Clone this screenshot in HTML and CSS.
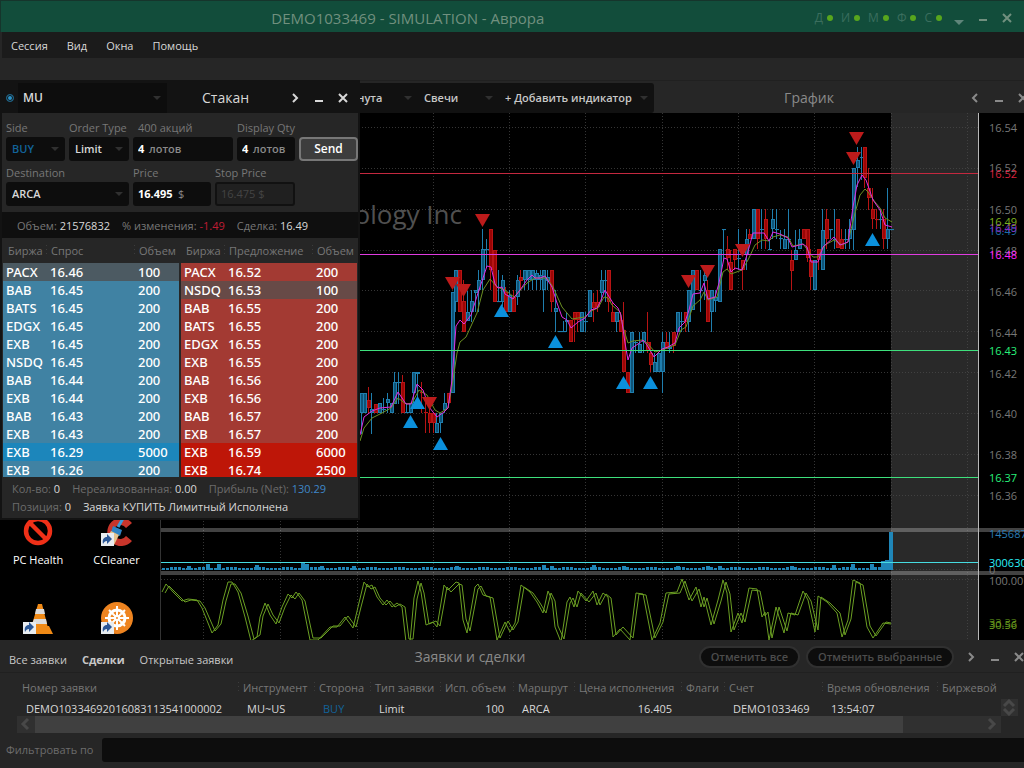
FILE: index.html
```html
<!DOCTYPE html>
<html lang="ru">
<head>
    <meta charset="UTF-8">
    <meta name="viewport" content="width=device-width, initial-scale=1.0">
    <title>DEMO1033469 - SIMULATION - Аврора</title>
    <link rel="stylesheet" href="styles.css">
</head>
<body>
    <!-- Title bar -->
    <header class="titlebar">
        <h1>DEMO1033469 - SIMULATION - Аврора</h1>
        <ul class="status">
            <li>Д</li>
            <li>И</li>
            <li>М</li>
            <li>Ф</li>
            <li>С</li>
        </ul>
        <div class="window-buttons">
            <button aria-label="Свернуть в трей"><svg width="10" height="12"><path d="M0 8h10l-5 5z" fill="#5f857a"/></svg></button>
            <button aria-label="Свернуть"><svg width="10" height="12"><path d="M1 8h8" /></svg></button>
            <button aria-label="Закрыть"><svg width="10" height="12"><path d="M1 2l8 8M9 2l-8 8"/></svg></button>
        </div>
    </header>

    <!-- Menu -->
    <nav class="menu">
        <a href="#session">Сессия</a>
        <a href="#view">Вид</a>
        <a href="#windows">Окна</a>
        <a href="#help">Помощь</a>
    </nav>
    <div class="toolbar"></div>

    <main class="workspace">
        <!-- Desktop icons -->
        <div class="desktop">
            <div class="shortcut">
                <svg width="36" height="36" viewBox="0 0 36 36">
                    <circle cx="18" cy="18" r="12" fill="none" stroke="#f03018" stroke-width="4.5"/>
                    <path d="M10 10l16 16" stroke="#f03018" stroke-width="4.5"/>
                </svg>
                <span>PC Health</span>
            </div>
            <div class="shortcut">
                <svg width="36" height="36" viewBox="0 0 36 36">
                    <path d="M33 10a14 14 0 1 0 0 18l-6-5a7 7 0 1 1 0-8z" fill="#c8352b"/>
                    <path d="M26 2l-7 12" stroke="#3b9ad8" stroke-width="3"/>
                    <path d="M14 13l9 4-2 6-9-4z" fill="#2f83c4"/>
                    <path d="M12 18l8 4-5 10-9-4z" fill="#e6c58e"/>
                    <path d="M2 20h13v13H2z" fill="#e8ecf0"/>
                    <path d="M4 31c-1-5 1-7 4-7v-3l5 5-5 5v-3c-2 0-3 1-4 3z" fill="#2b5796"/>
                </svg>
                <span>CCleaner</span>
            </div>
            <div class="shortcut">
                <svg width="36" height="36" viewBox="0 0 36 36">
                    <path d="M9 26h20l4 8H5z" fill="#f08a16"/>
                    <path d="M18 4h4l6 24c-4 3-13 3-17 0z" fill="#f08a16"/>
                    <path d="M16 9h8l1 5H15zM14 19h12l1 5H12z" fill="#dcdcdc"/>
                    <path d="M3 22h13v12H3z" fill="#e8ecf0"/>
                    <path d="M5 32c-1-5 1-7 4-7v-3l5 5-5 5v-3c-2 0-3 1-4 3z" fill="#2b5796"/>
                </svg>
            </div>
            <div class="shortcut">
                <svg width="36" height="36" viewBox="0 0 36 36">
                    <circle cx="18" cy="18" r="16" fill="#ee8420"/>
                    <g fill="none" stroke="#fff" stroke-width="3">
                        <circle cx="18" cy="18" r="8"/>
                        <path stroke-width="2" d="M18 6v24M6 18h24M10 10l16 16M26 10L10 26"/>
                        <circle cx="18" cy="18" r="2" fill="#ee8420" stroke-width="2"/>
                    </g>
                    <path d="M2 22h13v12H2z" fill="#e8ecf0"/>
                    <path d="M4 32c-1-5 1-7 4-7v-3l5 5-5 5v-3c-2 0-3 1-4 3z" fill="#2b5796"/>
                </svg>
            </div>
        </div>

        <!-- Chart window -->
        <section class="chart-window">
            <div class="chart-header">
                <div class="drop chart-period"><select aria-label="Период"><option>1 минута</option></select></div>
                <div class="drop chart-type"><select aria-label="Тип графика"><option>Свечи</option></select></div>
                <div class="drop chart-add"><select aria-label="Индикатор"><option>+ Добавить индикатор</option></select></div>
                <h2>График</h2>
                <div class="window-buttons">
                    <button aria-label="Назад"><svg width="10" height="12"><path d="M7 2L3 6l4 4"/></svg></button>
                    <button aria-label="Свернуть"><svg width="10" height="12"><path d="M1 9h8"/></svg></button>
                    <button aria-label="Закрыть"><svg width="10" height="12"><path d="M1 2l8 8M9 2l-8 8"/></svg></button>
                </div>
            </div>
            <svg class="chart" id="chart" viewBox="161 113 863 527" preserveAspectRatio="xMaxYMin slice">
                <rect x="891" y="113" width="87" height="527" fill="#292929"/>
                <g id="grid" class="grid"></g>
                <text class="watermark" x="462" y="224" text-anchor="end">Micron Technology Inc</text>
                <g id="candles"></g>
                <polyline class="ma-slow" points="360,441 364,428 372,418 382,413 391,408 398,398 406,404 412,403 419,390 427,395 435,410 440,413 448,408 453,380 457,353 460,342 466,337 477,313 483,290 490,279 497,287 505,290 514,297 527,283 535,278 547,278 553,287 562,307 572,319 578,318 585,317 591,311 598,308 604,297 608,298 612,305 620,312 623,327 628,343 633,341 642,340 647,343 655,352 662,350 675,345 681,330 686,327 693,306 700,300 704,292 708,300 717,297 723,272 727,269 731,274 742,270 748,260 755,245 762,240 769,241 773,237 780,235 788,237 793,246 803,244 813,257 818,257 825,245 834,240 842,245 848,242 855,213 860,195 865,189 868,192 875,202 880,208 885,218 892,222"/>
                <polyline class="ma-fast" points="360,435 364,417 372,411 380,408 391,407 398,392 406,404 411,404 417,384 423,390 429,407 437,417 444,412 448,408 452,380 456,326 460,320 464,324 471,315 478,293 487,266 491,267 495,284 498,288 502,287 505,294 513,299 520,290 527,280 532,275 535,278 540,278 545,276 552,287 557,303 562,317 567,320 571,328 578,322 585,318 591,310 597,308 601,300 605,290 608,295 613,303 618,308 621,315 625,343 628,360 632,348 638,344 643,340 647,345 654,357 662,349 668,347 675,343 679,328 685,322 689,310 693,294 700,293 704,283 708,299 715,297 719,283 724,258 727,259 731,272 735,268 742,270 747,255 753,233 764,233 769,241 773,232 780,234 788,238 792,247 803,244 807,247 811,262 818,262 823,247 834,237 840,245 848,242 853,207 857,185 862,175 866,180 873,200 880,210 885,225 892,227"/>
                <path d="M161 173.500h817" stroke="#c4283f"/>
                <path d="M161 254.500h817" stroke="#e03ce0"/>
                <path d="M161 350.500h817" stroke="#3ee07c"/>
                <path d="M161 477.500h817" stroke="#3ee07c"/>
                <g id="markers"></g>

                <g id="volume" fill="#1f86b8"></g>
                <path d="M161 562.500h817" stroke="#46dce0"/>
                <g id="stochastic" class="stochastic"></g>
                <path d="M161 530h863M161 573h863" stroke="#fff" stroke-opacity=".26" stroke-width="4"/>
                <path d="M978.500 113v527" stroke="#b8b8b8"/>

                <g class="axis">
                    <text x="989" y="132">16.54</text>
                    <text x="989" y="172">16.52</text>
                    <text x="989" y="214">16.50</text>
                    <text x="989" y="255">16.48</text>
                    <text x="989" y="296">16.46</text>
                    <text x="989" y="337">16.44</text>
                    <text x="989" y="378">16.42</text>
                    <text x="989" y="418">16.40</text>
                    <text x="989" y="459">16.38</text>
                    <text x="989" y="500">16.36</text>
                    <text x="989" y="178" fill="#d8203c">16.52</text>
                    <text x="989" y="235" fill="#1d6da8">16.49</text>
                    <text x="989" y="232" fill="#8d2bbd">16.49</text>
                    <text x="989" y="226" fill="#7cb01e">16.49</text>
                    <text x="989" y="259" fill="#ff20ff">16.48</text>
                    <text x="989" y="355" fill="#28f07a">16.43</text>
                    <text x="989" y="482" fill="#28f07a">16.37</text>
                    <text x="989" y="538" fill="#2a7db5">1456870</text>
                    <text x="989" y="574">0</text>
                    <text x="989" y="567" fill="#2af0f8">300630</text>
                    <text x="989" y="585">100.00</text>
                    <text x="989" y="627" fill="#4f7c16">33.33</text>
                    <text x="989" y="629" fill="#6f9f1e">30.56</text>
                </g>
            </svg>
        </section>

        <!-- Order book window -->
        <section class="book">
            <div class="book-header">
                <input type="radio" checked aria-label="Связать окна">
                <div class="drop symbol"><select aria-label="Инструмент"><option>MU</option></select></div>
                <h2>Стакан</h2>
                <div class="window-buttons">
                    <button aria-label="Вперед"><svg width="10" height="12"><path d="M3 2l4 4-4 4"/></svg></button>
                    <button aria-label="Свернуть"><svg width="10" height="12"><path d="M1 9h8"/></svg></button>
                    <button aria-label="Закрыть"><svg width="10" height="12"><path d="M1 2l8 8M9 2l-8 8"/></svg></button>
                </div>
            </div>

            <form class="order-form">
                <div class="field side">
                    <label for="side">Side</label>
                    <div class="drop box"><select id="side"><option>BUY</option></select></div>
                </div>
                <div class="field">
                    <label for="type">Order Type</label>
                    <div class="drop box"><select id="type"><option>Limit</option></select></div>
                </div>
                <div class="field">
                    <label class="inset" for="qty">400 акций</label>
                    <div class="box unit"><input id="qty" type="text" value="4" size="1"><span>лотов</span></div>
                </div>
                <div class="field display">
                    <label for="display">Display Qty</label>
                    <div class="box unit"><input id="display" type="text" value="4" size="1"><span>лотов</span></div>
                </div>
                <button class="send" type="button">Send</button>
                <div class="field destination">
                    <label for="dest">Destination</label>
                    <div class="drop box"><select id="dest"><option>ARCA</option></select></div>
                </div>
                <div class="prices">
                    <div class="field">
                        <label for="price">Price</label>
                        <div class="box unit price"><input id="price" type="text" value="16.495"><span>$</span></div>
                    </div>
                    <div class="field">
                        <label for="stop">Stop Price</label>
                        <div class="box stop"><input id="stop" type="text" value="16.475 $" disabled></div>
                    </div>
                </div>
            </form>

            <p class="stats">
                <span>Объем: <b>21576832</b></span>
                <span>% изменения: <b class="down">-1.49</b></span>
                <span>Сделка: <b>16.49</b></span>
            </p>

            <div class="levels">
                <table class="bids">
                    <thead><tr><th>Биржа</th><th>Спрос</th><th>Объем</th></tr></thead>
                    <tbody>
                        <tr class="mine"><td>PACX</td><td>16.46</td><td>100</td></tr>
                        <tr><td>BAB</td><td>16.45</td><td>200</td></tr>
                        <tr><td>BATS</td><td>16.45</td><td>200</td></tr>
                        <tr><td>EDGX</td><td>16.45</td><td>200</td></tr>
                        <tr><td>EXB</td><td>16.45</td><td>200</td></tr>
                        <tr><td>NSDQ</td><td>16.45</td><td>200</td></tr>
                        <tr><td>BAB</td><td>16.44</td><td>200</td></tr>
                        <tr><td>EXB</td><td>16.44</td><td>200</td></tr>
                        <tr><td>BAB</td><td>16.43</td><td>200</td></tr>
                        <tr><td>EXB</td><td>16.43</td><td>200</td></tr>
                        <tr class="big"><td>EXB</td><td>16.29</td><td>5000</td></tr>
                        <tr><td>EXB</td><td>16.26</td><td>200</td></tr>
                    </tbody>
                </table>
                <table class="asks">
                    <thead><tr><th>Биржа</th><th>Предложение</th><th>Объем</th></tr></thead>
                    <tbody>
                        <tr><td>PACX</td><td>16.52</td><td>200</td></tr>
                        <tr class="mine"><td>NSDQ</td><td>16.53</td><td>100</td></tr>
                        <tr><td>BAB</td><td>16.55</td><td>200</td></tr>
                        <tr><td>BATS</td><td>16.55</td><td>200</td></tr>
                        <tr><td>EDGX</td><td>16.55</td><td>200</td></tr>
                        <tr><td>EXB</td><td>16.55</td><td>200</td></tr>
                        <tr><td>BAB</td><td>16.56</td><td>200</td></tr>
                        <tr><td>EXB</td><td>16.56</td><td>200</td></tr>
                        <tr><td>BAB</td><td>16.57</td><td>200</td></tr>
                        <tr><td>EXB</td><td>16.57</td><td>200</td></tr>
                        <tr class="big"><td>EXB</td><td>16.59</td><td>6000</td></tr>
                        <tr class="big"><td>EXB</td><td>16.74</td><td>2500</td></tr>
                    </tbody>
                </table>
            </div>

            <div class="book-footer">
                <p>
                    <span>Кол-во: <b>0</b></span>
                    <span>Нереализованная: <b>0.00</b></span>
                    <span>Прибыль (Net): <b class="profit">130.29</b></span>
                </p>
                <p>
                    <span>Позиция: <b>0</b></span>
                    <b>Заявка КУПИТЬ Лимитный Исполнена</b>
                </p>
            </div>
        </section>
    </main>

    <!-- Orders and trades -->
    <section class="orders">
        <div class="orders-header">
            <nav class="tabs">
                <a href="#all">Все заявки</a>
                <a href="#trades" class="active">Сделки</a>
                <a href="#open">Открытые заявки</a>
            </nav>
            <h2>Заявки и сделки</h2>
            <div class="orders-actions">
                <button class="pill" disabled>Отменить все</button>
                <button class="pill" disabled>Отменить выбранные</button>
            </div>
            <div class="window-buttons">
                <button aria-label="Вперед"><svg width="10" height="12"><path d="M3 2l4 4-4 4"/></svg></button>
                <button aria-label="Свернуть"><svg width="10" height="12"><path d="M1 9h8"/></svg></button>
                <button aria-label="Закрыть"><svg width="10" height="12"><path d="M1 2l8 8M9 2l-8 8"/></svg></button>
            </div>
        </div>
        <div class="orders-table">
            <table>
                <colgroup>
                    <col class="c-number"><col class="c-symbol"><col class="c-side"><col class="c-type"><col class="c-filled"><col class="c-route"><col class="c-price"><col class="c-flags"><col class="c-account"><col class="c-time"><col>
                </colgroup>
                <thead>
                    <tr><th>Номер заявки</th><th>Инструмент</th><th>Сторона</th><th>Тип заявки</th><th>Исп. объем</th><th>Маршрут</th><th>Цена исполнения</th><th>Флаги</th><th>Счет</th><th>Время обновления</th><th>Биржевой</th></tr>
                </thead>
                <tbody>
                    <tr><td>DEMO10334692016083113541000002</td><td>MU~US</td><td class="buy">BUY</td><td>Limit</td><td class="num">100</td><td>ARCA</td><td class="num">16.405</td><td></td><td>DEMO1033469</td><td>13:54:07</td><td></td></tr>
                </tbody>
            </table>
            <div class="spin"><svg width="17" height="17" viewBox="0 0 17 17"><path d="M3 7l5-5 5 5M3 10l5 5 5-5"/></svg></div>
        </div>
        <div class="scrollbar">
            <svg width="18" height="17" viewBox="0 0 18 17"><path d="M11 3L6 8l5 5"/></svg>
            <div class="thumb"></div>
            <svg width="18" height="17" viewBox="0 0 18 17"><path d="M6 3l5 5-5 5"/></svg>
        </div>
        <div class="filter">
            <label for="filter">Фильтровать по</label>
            <input id="filter" type="text">
        </div>
    </section>

    <script src="chart.js"></script>
</body>
</html>
```

FILE: styles.css
```css
* {
    box-sizing: border-box;
}

body {
    margin: 0;
    height: 100vh;
    display: flex;
    flex-direction: column;
    overflow: hidden;
    background: #000;
    color: #d8d8d8;
    font: 11px/16px "Open Sans", "Noto Sans", sans-serif;
}

h1, h2, p, ul {
    margin: 0;
    padding: 0;
    font-weight: normal;
}

h1 {
    font-size: 15px;
    line-height: 20px;
}

h2 {
    font-size: 14px;
    line-height: 20px;
}

a {
    color: inherit;
    text-decoration: none;
}

button, input, select {
    font: inherit;
    color: inherit;
    background: none;
    border: 0;
    padding: 0;
    margin: 0;
    min-width: 0;
}

table {
    border-collapse: collapse;
    table-layout: fixed;
    width: 100%;
}

th, td {
    padding: 0;
    text-align: left;
    font-weight: normal;
    white-space: nowrap;
    overflow: hidden;
}

/* Column separators in table headers */
th + th {
    background: repeating-linear-gradient(#3c3c3c 0 1px, transparent 1px 4px) 0 50% / 1px 12px no-repeat;
}

/* Title bar and menu */
.titlebar {
    flex: none;
    height: 32px;
    display: flex;
    align-items: center;
    border-top: 1px solid #16352c;
    border-left: 1px solid #16352c;
    padding-top: 2px;
    padding-right: 12px;
    background: #124d3b;
    color: #71907f;
}

.titlebar h1 {
    flex: 1;
    text-align: center;
}

.status {
    display: flex;
    gap: 8px;
    list-style: none;
    font-size: 12px;
    color: #3b6e5e;
    margin-right: 12px;
}

.status li {
    display: flex;
    align-items: center;
    gap: 4px;
}

.status li::after {
    content: "";
    width: 6px;
    height: 6px;
    border-radius: 50%;
    background: #58a61d;
}

.window-buttons {
    display: flex;
    gap: 14px;
}

.window-buttons button {
    display: flex;
}

.window-buttons svg {
    overflow: visible;
}

.window-buttons path {
    fill: none;
    stroke: currentColor;
    stroke-width: 2;
}

.window-buttons path[fill] {
    fill: #5f857a;
    stroke: none;
}

.menu {
    flex: none;
    height: 26px;
    display: flex;
    align-items: center;
    gap: 19px;
    padding: 2px 9px 0;
    background: #1b1b1b;
    border-left: 2px solid #262626;
}

.toolbar {
    flex: none;
    height: 22px;
    background: #262626;
}

/* Workspace */
.workspace {
    flex: 1;
    min-height: 0;
    position: relative;
    display: grid;
    grid-template-columns: 161px 1fr;
}

.desktop {
    display: grid;
    grid-template-columns: 76px 81px;
    grid-auto-rows: 87px;
    align-content: end;
    overflow: hidden;
    color: #fff;
    border-right: 1px solid #333;
}

.shortcut {
    height: 140px;
    padding-top: 47px;
    display: flex;
    flex-direction: column;
    align-items: center;
    gap: 3px;
}

/* Drop-downs */
.drop {
    position: relative;
}

.drop select {
    appearance: none;
    width: 100%;
    height: 100%;
    padding: 0 6px;
    font-weight: 600;
}

.drop::after {
    content: "";
    position: absolute;
    right: 6px;
    top: 50%;
    margin-top: -2px;
    border: 4px solid transparent;
    border-top-color: #303030;
    border-bottom: 0;
    pointer-events: none;
}

/* Chart window */
.chart-window {
    display: flex;
    flex-direction: column;
    min-width: 0;
    min-height: 0;
    overflow: hidden;
}

.chart-header {
    flex: none;
    height: 33px;
    display: flex;
    align-items: center;
    padding-top: 1px;
    padding-left: 165px;
    background: #262626;
    color: #8a8a8a;
    border-top: 1px solid #202020;
}

.chart-header .drop {
    height: 30px;
    background: #111;
    color: #c8c8c8;
}

.chart-period {
    width: 92px;
}

.chart-type {
    width: 81px;
}

.chart-header .chart-add {
    width: 155px;
    border-radius: 0 3px 3px 0;
}

.chart-header h2 {
    flex: 1;
    text-align: center;
}

.chart-header .window-buttons {
    margin-right: -4px;
    padding-left: 6px;
    flex: none;
}

.chart {
    flex: 1;
    width: 100%;
    min-height: 0;
    display: block;
    background: #000;
}

.chart polyline {
    fill: none;
}

.grid {
    stroke: #4c4c4c;
    stroke-opacity: .7;
    stroke-dasharray: 1 2;
    fill: none;
}

.watermark {
    font-size: 26px;
    fill: #505050;
}

.ma-slow {
    stroke: #6b8f23;
}

.ma-fast {
    stroke: #e02ce0;
}

.candle-up {
    fill: #0e5478;
    stroke: #1f7eae;
}

.candle-down {
    fill: #9c0505;
    stroke: #b81414;
}

.buy-mark {
    fill: #0b90dc;
}

.sell-mark {
    fill: #bd1b1b;
}

.stochastic {
    stroke: #6b9f23;
}

.axis {
    font-size: 11px;
    fill: #777;
}

/* Order book window */
.book {
    position: absolute;
    left: 0;
    top: 0;
    width: 360px;
    border: solid #131313;
    border-width: 0 2px 2px;
    background: #262626;
}

.book-header {
    height: 33px;
    display: flex;
    align-items: center;
    padding: 2px 10px 0 4px;
    background: #131313;
}

.book-header input {
    appearance: none;
    width: 8px;
    height: 8px;
    border: 1px solid #1e5f80;
    border-radius: 50%;
    background: #2a92c8;
    box-shadow: inset 0 0 0 1px #131313;
}

.symbol {
    width: 149px;
    height: 30px;
    margin-left: 4px;
    background: #0d0d0d;
    font-size: 12px;
}

.book-header .symbol select {
    padding: 0 5px;
}

.book-header h2 {
    flex: 1;
    padding-right: 6px;
    text-align: center;
}

.order-form {
    display: grid;
    grid-template-columns: 59px 60px 100px 58px 1fr;
    column-gap: 4px;
    row-gap: 4px;
    padding: 7px 0 6px 4px;
}

.field {
    display: flex;
    flex-direction: column;
    gap: 1px;
}

.field label {
    color: #777;
    white-space: nowrap;
}

.field .inset {
    padding-left: 5px;
}

.box {
    height: 24px;
    border-radius: 3px;
    background: #0d0d0d;
    font-weight: 600;
}

.side select {
    color: #12639a;
}

.unit {
    display: flex;
    align-items: center;
    gap: 4px;
    padding: 0 5px;
    color: #8a8a8a;
}

.unit input {
    width: 7px;
    color: #fff;
    font-weight: 700;
}

.price input {
    width: 36px;
}

.price span {
    font-weight: normal;
}

.send {
    align-self: end;
    height: 24px;
    border: 2px solid #777;
    border-radius: 4px;
    background: #3d3d3d;
    color: #fff;
    font-size: 12px;
    font-weight: 600;
}

.destination {
    grid-column: span 2;
}

.prices {
    grid-column: span 3;
    display: grid;
    grid-template-columns: 78px 80px;
    gap: 4px;
}

.stop {
    border: 2px solid #111;
    background: #202020;
    display: flex;
}

.stop input {
    width: 100%;
    padding-left: 4px;
    color: #444;
    font-weight: normal;
}

.stats {
    height: 26px;
    display: flex;
    align-items: center;
    gap: 12px;
    padding-top: 2px;
    padding-left: 15px;
    background: #0f0f0f;
    color: #777;
    white-space: nowrap;
}

.stats b, .book-footer b {
    font-weight: normal;
    color: #d8d8d8;
}

.stats .down {
    color: #c01c34;
}

.book-footer .profit {
    color: #3f87c8;
}

.levels {
    display: grid;
    grid-template-columns: 1fr 1fr;
    gap: 2px;
    height: 239px;
    overflow: hidden;
    padding: 0 1px;
}

.levels th {
    height: 25px;
    color: #777;
    padding-left: 5px;
}

.levels th:nth-child(1) {
    width: 43px;
    padding-right: 3px;
}

.levels th:nth-child(2) {
    width: 88px;
}

.levels td {
    height: 18px;
    padding-left: 3px;
    color: #fff;
    font: 500 13px/18px "Noto Sans", sans-serif;
}

.levels td:nth-child(2) {
    padding-left: 4px;
}

.levels td:nth-child(3) {
    padding-left: 4px;
}

.bids tbody {
    background: #4082a3;
}

.bids .mine {
    background: #4c5a62;
}

.bids .big {
    background: #1c86bb;
}

.asks tbody {
    background: #a33a33;
}

.asks .mine {
    background: #674a47;
}

.asks .big {
    background: #be1608;
}

.book-footer {
    padding: 3px 10px 2px;
    color: #6c6c6c;
}

.book-footer p {
    display: flex;
    gap: 12px;
    height: 18px;
    align-items: center;
    white-space: nowrap;
}

/* Orders panel */
.orders {
    flex: none;
    background: #262626;
}

.orders-header {
    height: 33px;
    display: flex;
    align-items: center;
    padding-top: 2px;
    padding-left: 9px;
    border-bottom: 1px solid #202020;
    color: #8a8a8a;
}

.tabs {
    display: flex;
    gap: 15px;
    padding-top: 6px;
    color: #c8c8c8;
}

.tabs .active {
    font-weight: 700;
}

.orders-header h2 {
    flex: 1;
    padding-left: 8px;
    text-align: center;
}

.orders-actions {
    display: flex;
    gap: 6px;
    margin-right: 12px;
}

.pill {
    height: 22px;
    padding: 0 10px;
    border: 2px solid #303030;
    border-radius: 11px;
    background: #0d0d0d;
    color: #4c4c4c;
    font-weight: 600;
}

.orders-table {
    position: relative;
    height: 43px;
    overflow: hidden;
}

.orders-table th {
    height: 29px;
    color: #777;
    padding-left: 5px;
}

.orders-table th:first-child {
    padding-left: 22px;
}

.orders-table td {
    height: 14px;
    line-height: 14px;
    padding-left: 9px;
}

.orders-table td:first-child {
    padding-left: 26px;
}

.orders-table .buy {
    color: #12639a;
}

.orders-table .num {
    text-align: right;
    padding-right: 9px;
}

.c-number { width: 238px; }
.c-symbol { width: 76px; }
.c-side { width: 56px; }
.c-type { width: 70px; }
.c-filled { width: 73px; }
.c-route { width: 61px; }
.c-price { width: 107px; }
.c-flags { width: 43px; }
.c-account { width: 98px; }
.c-time { width: 115px; }

.spin {
    position: absolute;
    right: 6px;
    bottom: 0;
    width: 17px;
    height: 17px;
    background: #303030;
}

.spin path, .scrollbar path {
    fill: none;
    stroke: #484848;
    stroke-width: 3;
}

.spin svg, .scrollbar svg {
    display: block;
}

.scrollbar {
    display: flex;
    justify-content: space-between;
    height: 17px;
    margin: 0 23px 5px 17px;
    background: #303030;
}

.thumb {
    flex: 1;
    margin-right: 80px;
    background: #404040;
}

.filter {
    display: flex;
    align-items: center;
    gap: 9px;
    padding: 0 0 6px 6px;
    color: #6c6c6c;
}

.filter input {
    flex: 1;
    height: 24px;
    border-radius: 3px 0 0 3px;
    background: #0d0d0d;
}
```

FILE: chart.js
```javascript
// x, high, body top, body bottom, low, direction (1 up, 0 down)
const candles = [
    [361,393,393,413,434,1],[364,393,393,413,413,1],[368,387,400,408,413,0],[371,393,409,413,434,1],
    [375,404,404,413,413,0],[379,403,403,413,413,1],[383,398,409,410,413,1],[387,393,399,403,413,1],
    [391,403,403,413,413,1],[394,372,382,404,404,1],[398,372,382,383,404,1],[402,375,382,413,413,0],
    [406,403,412,413,413,1],[410,403,403,413,413,1],[413,372,372,393,403,1],[417,372,372,374,403,1],
    [421,382,392,393,413,0],[425,400,412,413,433,0],[429,400,413,423,433,0],[433,413,413,423,433,0],
    [436,413,423,433,433,1],[440,413,413,423,433,1],[444,393,403,410,413,1],[448,393,393,403,408,0],
    [452,292,292,393,393,1],[455,270,270,302,312,1],[459,270,270,312,312,0],[463,280,301,332,332,0],
    [467,291,312,321,321,1],[471,290,301,312,322,1],[475,290,290,293,312,1],[478,270,280,290,312,1],
    [482,229,249,280,290,1],[486,239,249,250,267,1],[490,229,229,270,290,0],[494,250,250,302,302,0],
    [498,270,301,302,302,1],[502,275,280,302,306,1],[505,287,292,312,312,0],[509,290,295,312,312,1],
    [513,290,297,312,312,0],[517,275,280,297,305,1],[520,270,277,281,290,0],[524,270,270,280,290,1],
    [528,270,270,280,290,1],[532,270,270,280,290,1],[536,270,273,280,290,1],[540,270,275,280,290,1],
    [543,270,270,290,312,1],[547,270,277,281,290,1],[551,270,270,302,312,0],[555,290,308,312,332,1],
    [559,331,331,332,332,1],[563,321,331,332,332,1],[566,312,320,322,332,1],[570,320,320,342,342,0],
    [574,312,312,320,342,0],[577,312,312,320,332,0],[581,312,312,332,332,1],[585,312,321,322,332,1],
    [589,290,290,317,317,1],[593,293,302,308,322,0],[597,290,302,307,312,0],[601,270,280,293,302,1],
    [605,270,280,281,302,1],[608,270,270,302,312,0],[612,302,312,322,322,0],[616,312,312,322,332,1],
    [620,312,320,332,332,0],[623,302,330,372,372,0],[627,372,372,393,393,0],[631,332,332,393,393,1],
    [635,341,342,343,353,1],[639,332,344,353,353,1],[643,332,332,342,353,1],[647,312,342,351,353,0],
    [650,342,353,365,372,0],[654,353,362,372,372,1],[658,353,353,372,372,1],[662,332,342,372,393,1],
    [666,332,342,349,349,0],[669,332,347,349,353,1],[673,332,332,346,353,0],[677,312,312,332,332,1],
    [681,312,321,322,332,1],[685,312,312,322,332,0],[688,290,290,322,332,1],[692,270,270,310,310,1],
    [696,270,270,290,290,0],[700,270,290,291,312,1],[704,267,275,281,300,1],[707,280,290,322,322,0],
    [711,290,290,312,332,1],[715,290,297,301,312,1],[719,249,249,302,302,1],[723,229,229,230,260,1],
    [727,236,249,258,270,0],[730,250,262,290,290,0],[734,249,249,260,270,0],[738,229,258,259,270,1],
    [742,260,260,270,290,0],[746,229,239,255,270,1],[749,229,234,239,239,0],[753,209,209,239,239,1],
    [757,209,209,239,249,0],[761,209,229,230,249,1],[765,209,219,239,249,0],[769,240,249,250,250,1],
    [772,209,219,229,239,1],[776,209,229,230,239,1],[780,230,238,239,249,1],[784,229,239,249,249,1],
    [788,209,239,240,249,1],[791,250,260,271,290,0],[795,230,250,260,260,1],[799,229,239,249,249,1],
    [803,229,229,239,239,0],[807,229,229,258,262,0],[810,249,260,277,290,0],[814,260,260,290,290,1],
    [818,249,249,260,270,0],[822,209,230,270,270,1],[826,209,219,239,249,0],[830,229,229,230,239,1],
    [834,209,239,240,249,1],[837,219,219,248,248,0],[841,229,239,249,249,0],[845,229,239,240,249,1],
    [849,219,229,239,249,1],[853,168,168,230,250,1],[857,147,160,168,187,1],[861,147,157,158,180,1],
    [864,147,147,178,188,0],[868,168,188,198,210,0],[872,188,209,219,229,0],[876,209,219,220,229,0],
    [880,209,219,220,229,1],[883,209,219,239,249,0],[887,188,229,239,249,1],[891,229,229,230,230,1]
];

// centre x, top y
const sells = [[482,214],[452,277],[463,284],[429,397],[688,275],[707,265],[742,244],[856,132],[853,152]];
const buys = [[501,305],[555,336],[417,397],[410,416],[440,438],[623,377],[650,377],[872,234]];

const stochastic = [
    162,592,166,584,173,592,182,601,188,599,197,600,202,608,212,633,218,625,223,600,228,582,232,582,238,592,
    245,617,251,641,257,637,260,617,265,603,270,615,276,624,282,607,288,594,292,598,296,592,302,600,310,640,
    318,640,330,627,337,627,345,617,353,628,358,607,364,582,368,587,372,585,377,597,383,605,387,600,392,607,
    397,603,402,607,406,642,410,642,414,598,418,581,421,592,426,625,433,622,437,627,441,603,444,585,448,590,
    456,582,459,583,463,620,467,633,471,610,475,587,478,584,483,595,490,597,497,640,505,622,510,632,515,623,
    521,585,530,592,537,602,543,613,548,591,552,600,555,627,561,642,567,602,570,597,574,607,578,591,586,601,
    593,591,597,605,603,593,608,597,613,637,620,629,630,640,636,593,643,594,652,640,660,623,666,593,677,592,
    682,579,685,588,689,600,696,587,701,607,704,597,711,625,718,600,723,580,727,593,731,632,738,613,742,623,
    749,588,757,589,762,617,765,612,769,640,776,607,784,633,788,613,795,615,803,591,808,600,815,632,818,596,
    827,602,837,613,842,637,848,620,853,580,860,583,867,627,873,638,883,623,891,624
];

// bars taller than the usual 2px
const volumes = {
    187: 4, 206: 6, 217: 6, 255: 5, 301: 8, 305: 6, 320: 4, 352: 4, 455: 4, 542: 5, 550: 4,
    592: 5, 622: 4, 676: 4, 706: 4, 718: 4, 790: 4, 832: 5, 851: 6, 870: 6, 881: 9, 885: 10, 889: 38
};

function draw(id, html) {
    document.getElementById(id).innerHTML = html;
}

let grid = '';
[203, 280, 357, 433, 509, 585, 662, 738, 814, 891, 967].forEach(x => {
    grid += `M${x}.5 113V640`;
});
[127, 168, 209, 250, 290, 331, 372, 413, 454, 495, 569, 579].forEach(y => {
    grid += `M161 ${y}.5H978`;
});
draw('grid', `<path d="${grid}"/>`);

draw('candles', candles.map(([x, high, top, bottom, low, up]) => `
    <g class="${up ? 'candle-up' : 'candle-down'}">
        <path d="M${x}.5 ${high}V${low}"/>
        <rect x="${x - 1}.5" y="${top}.5" width="3" height="${Math.max(bottom - top - 1, 0.1)}"/>
    </g>`).join(''));

draw('markers',
    sells.map(([x, y]) => `<path class="sell-mark" d="M${x - 7} ${y}h15l-7.500 13z"/>`).join('') +
    buys.map(([x, y]) => `<path class="buy-mark" d="M${x - 7} ${y + 12}h15l-7.500 -13z"/>`).join(''));

let bars = '';
for (let x = 162; x < 890; x += 4) {
    const h = x % 28 < 12 ? 3 : 2;
    bars += `<rect x="${x}" y="${570 - h}" width="3" height="${h}"/>`;
}
for (const x in volumes) {
    bars += `<rect x="${x}" y="${570 - volumes[x]}" width="4" height="${volumes[x]}"/>`;
}
draw('volume', bars);

// signal line trails the main one
const signal = stochastic.map((v, i) => i % 2 ? Math.round(v + (610 - v) * 0.08) : Math.min(v + 3, 891));
draw('stochastic', `<polyline points="${stochastic}"/><polyline points="${signal}"/>`);
```
